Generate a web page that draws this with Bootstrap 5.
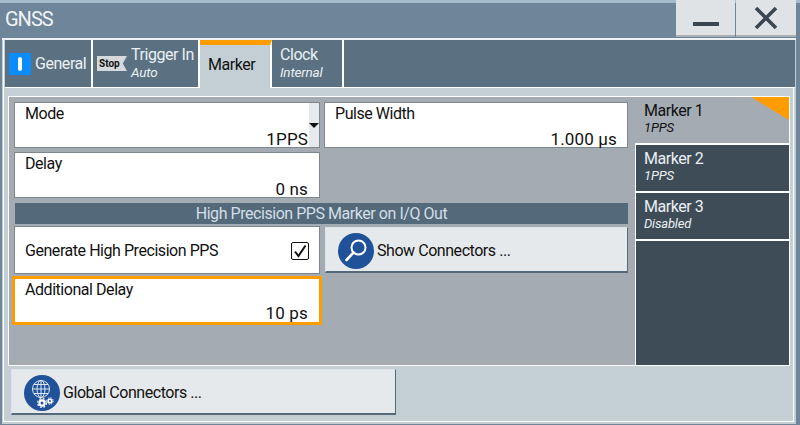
<!DOCTYPE html>
<html lang="en">
<head>
<meta charset="utf-8">
<title>GNSS</title>
<link href="https://cdn.jsdelivr.net/npm/bootstrap@5.3.0/dist/css/bootstrap.min.css" rel="stylesheet">
<style>
html,body{margin:0;height:425px;overflow:hidden;background:#6f8599;font-family:Roboto,"Liberation Sans",sans-serif;font-size:16px;letter-spacing:-.45px;color:#111;}
.wnd{width:800px;height:425px;border-top:3px solid #a6bbcb;}
.ttl{height:35px;}
.ttl-text{font-size:20px;color:#f0f4f6;padding-left:5px;line-height:32px;letter-spacing:-1px;}
.wbtn{width:59px;height:37px;margin-top:-3px;margin-right:1px;background:#dfe3e5;border:0;border-bottom:2px solid #a9afb3;border-radius:0;padding:0;}
.wbtn:last-child{width:60px;margin-right:4px;}
.frame{width:794px;height:386px;margin-left:2px;border-top:2px solid #eef1f3;background:#c3ced5;padding:0 2px 2px 1px;}
.inner{height:100%;border:1px solid #fff;border-top:0;}
.tabbar{height:48px;margin:0 -2px 0 1px;background:#5b7081;border-bottom:1px solid #fff;}
.tabx{height:47px;color:#eaf0f4;border-right:2px solid #fff;line-height:1;}
.tabx .big{font-size:16px;line-height:18px;}
.tabx .sub{font-size:13.5px;font-style:italic;line-height:16px;letter-spacing:-.2px;padding-bottom:1px;}
.tab1{width:88px;}
.tab2{width:107px;}
.tab3{width:72px;height:48px;background:#c3ced5;color:#111;border-top:5px solid #ff9c00;margin-bottom:-1px;padding:0 0 3px 8px;}
.tab4{width:72px;padding-left:8px;}
.tab-i{width:22px;height:22px;background:#0a8cff;margin-left:4px;margin-right:4px;}
.tab-i i{display:block;width:4px;height:14px;background:#fff;border-radius:2px;}
.stopt{font-size:10px;font-weight:700;color:#111;background:#d6d9db;width:30px;height:15px;line-height:15px;text-align:left;padding-left:2px;margin:0 4px 0 4px;clip-path:polygon(0 0,100% 0,86% 50%,100% 100%,0 100%);letter-spacing:0;flex:none;}
.panelw{height:270px;margin:8px 3px 0 4px;border:1px solid #fff;background:#a4abb2;}
.fields{display:grid;grid-template-columns:306px 304px;grid-auto-rows:min-content;column-gap:4px;padding:5px 0 0 5px;width:626px;}
.fld{height:46px;background:#fff;border:1px solid #7f878e;padding:2px 11px 0 10px;line-height:18px;position:relative;}
.fld .val{text-align:right;font-size:17px;margin-top:6px;letter-spacing:.15px;line-height:20px;}
.fld-wide{padding-right:10px;}
.fld-sp{margin-bottom:4px;}
.caret-box{position:absolute;right:0;top:0;bottom:0;width:10px;background:#e6eaed;}
.caret-box::after{content:"";position:absolute;left:0;top:20px;border:5px solid transparent;border-top:5px solid #111;border-bottom:0;}
.secbar{grid-column:1/3;height:21px;margin:5px 0 2px 1px;background:#54697a;color:#d3dfe7;text-align:center;line-height:21px;}
.chk{height:48px;display:flex;align-items:center;justify-content:space-between;padding:2px 10px 0 10px;}
.cbx{width:18px;height:18px;border:1.5px solid #111;border-radius:2px;background:#fff;}
.bigbtn{background:#e6e9ec;border:1px solid #dfe3e6;border-right:1px solid #54697a;border-bottom:2px solid #54697a;border-radius:0;padding:2px 0 0;font-size:16px;letter-spacing:-.45px;color:#111;--bs-btn-hover-bg:#e6e9ec;}
.showb{height:46px;margin:1px 0 1px 1px;padding-left:12px;}
.ico{width:36px;height:36px;flex:none;margin-right:3px;}
.adl{height:49px;margin:2px -2px 0 -2px;border:3px solid #ff9c00;padding:2px 11px 0 10px;}
.adl .val{margin-top:4px;}
.mlist{width:154px;}
.mk{height:48px;padding:4px 0 0 8px;line-height:1;color:#eaf0f4;background:#3e4c57;border-left:1px solid #fff;border-bottom:2px solid #fff;}
.mk .big{font-size:16px;line-height:19px;}
.mk .sub{font-size:13px;font-style:italic;line-height:15px;letter-spacing:-.2px;}
.mk-on{background:#a4abb2;color:#111;border-left:0;padding-left:9px;position:relative;}
.mk-on::after{content:"";position:absolute;right:0;top:0;width:38px;height:23px;background:#ff9c00;clip-path:polygon(0 0,100% 0,100% 100%);}
.mk-rest{background:#3e4c57;border-left:1px solid #fff;}
.foot{padding:3px 0 0 7px;}
.globb{width:385px;height:46px;padding-left:12px;}
</style>
</head>
<body>
<div class="wnd d-flex flex-column">
  <div class="ttl d-flex justify-content-between">
    <div class="ttl-text">GNSS</div>
    <div class="d-flex">
      <button type="button" class="btn wbtn" aria-label="Minimize"><svg width="28" height="28" viewBox="0 0 28 28"><rect x="1" y="18" width="26" height="4" fill="#3a4650"/></svg></button>
      <button type="button" class="btn wbtn" aria-label="Close"><svg width="26" height="26" viewBox="0 0 26 26"><path d="M3 3 23 23M23 3 3 23" stroke="#3a4650" stroke-width="3.6" fill="none"/></svg></button>
    </div>
  </div>
  <div class="frame">
  <div class="inner d-flex flex-column">
    <div class="tabbar d-flex">
      <div class="tabx tab1 d-flex align-items-center"><span class="tab-i d-flex align-items-center justify-content-center"><i></i></span><span class="big">General</span></div>
      <div class="tabx tab2 d-flex align-items-center"><span class="stopt">Stop</span><span><div class="big">Trigger In</div><div class="sub">Auto</div></span></div>
      <div class="tabx tab3 d-flex align-items-center"><span class="big">Marker</span></div>
      <div class="tabx tab4 d-flex flex-column justify-content-center"><div class="big">Clock</div><div class="sub">Internal</div></div>
    </div>
    <div class="panelw d-flex justify-content-between">
      <div class="fields">
        <div class="fld fld-sp">Mode<div class="val">1PPS</div><span class="caret-box"></span></div>
        <div class="fld fld-sp fld-wide">Pulse Width<div class="val">1.000 µs</div></div>
        <div class="fld">Delay<div class="val">0 ns</div></div>
        <div></div>
        <div class="secbar">High Precision PPS Marker on I/Q Out</div>
        <div class="fld chk"><span>Generate High Precision PPS</span><span class="cbx d-flex align-items-center justify-content-center"><svg width="14" height="14" viewBox="0 0 14 14"><path d="M2 7.5 5.5 12 12.5 1.5" stroke="#111" stroke-width="2" fill="none"/></svg></span></div>
        <button type="button" class="btn bigbtn showb d-flex align-items-center"><svg class="ico" viewBox="0 0 36 36"><circle cx="18" cy="18" r="18" fill="#1f5299"/><circle cx="20.5" cy="14.5" r="7" fill="none" stroke="#fff" stroke-width="2"/><path d="M15.5 19.5 8.5 27" stroke="#fff" stroke-width="2.6" stroke-linecap="round"/></svg>Show Connectors ...</button>
        <div class="fld adl">Additional Delay<div class="val">10 ps</div></div>
      </div>
      <div class="mlist d-flex flex-column">
        <div class="mk mk-on"><div class="big">Marker 1</div><div class="sub">1PPS</div></div>
        <div class="mk"><div class="big">Marker 2</div><div class="sub">1PPS</div></div>
        <div class="mk"><div class="big">Marker 3</div><div class="sub">Disabled</div></div>
        <div class="mk-rest flex-grow-1"></div>
      </div>
    </div>
    <div class="foot">
      <button type="button" class="btn bigbtn globb d-flex align-items-center"><svg class="ico" viewBox="0 0 36 36"><circle cx="18" cy="18" r="18" fill="#1f5299"/><g fill="none" stroke="#dfe8f2" stroke-width="1"><circle cx="17" cy="14" r="8.5"/><ellipse cx="17" cy="14" rx="4" ry="8.5"/><path d="M17 5.5V22.5M8.5 14H25.5M9.8 9.5H24.2M9.8 18.5H24.2"/></g><g fill="none" stroke="#fff"><circle cx="18" cy="28" r="2.6" stroke-width="2.2"/><circle cx="18" cy="28" r="4.4" stroke-width="1.2" stroke-dasharray="1.8 1.7"/><circle cx="26" cy="26" r="1.8" stroke-width="1.6"/><circle cx="26" cy="26" r="3.2" stroke-width="1" stroke-dasharray="1.4 1.1"/></g></svg>Global Connectors ...</button>
    </div>
  </div>
  </div>
</div>
<script src="https://cdn.jsdelivr.net/npm/bootstrap@5.3.0/dist/js/bootstrap.bundle.min.js"></script>
</body>
</html>
